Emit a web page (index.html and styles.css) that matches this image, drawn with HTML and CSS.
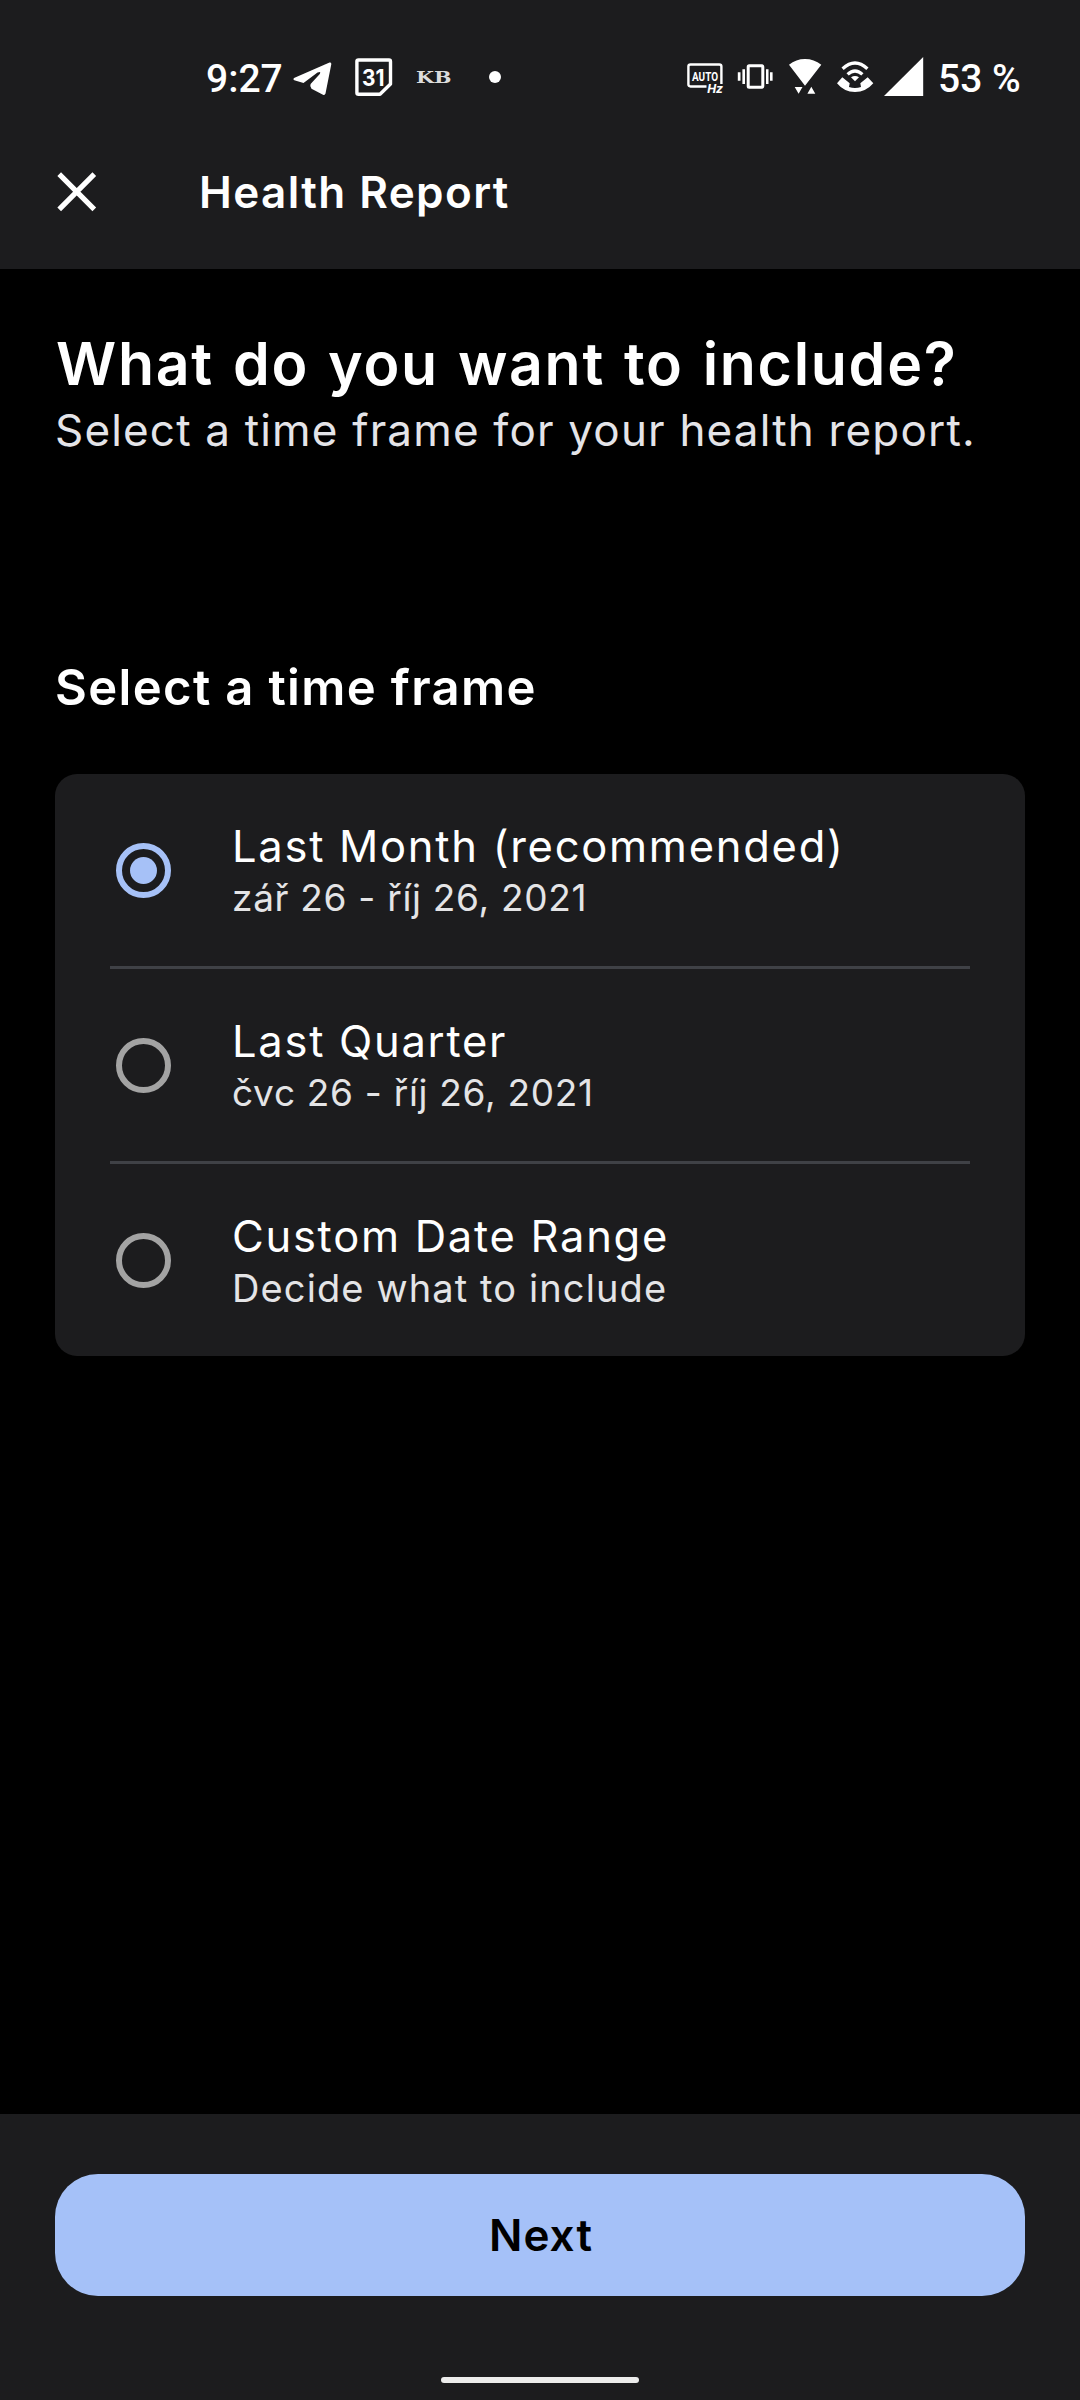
FILE: index.html
```html
<!DOCTYPE html>
<html lang="en">
<head>
<meta charset="utf-8">
<title>Health Report</title>
<link rel="stylesheet" href="styles.css">
</head>
<body>
<header class="top">
  <div class="status">
    <div class="status-left">
      <span class="clock">9:27</span>
      <svg class="telegram" width="44" height="44" viewBox="0 0 44 44"><path fill="#fff" d="M4 23Q2.500 24.300 4.300 25.200L13.500 28L27.500 17.600Q31.500 15.800 29.800 19L20.600 29Q19.400 31.500 21.500 33.700L33 39.800Q35 40.500 35.500 38.500L41.300 9.200Q41.500 7 39.500 7.600Z"/></svg>
      <svg class="calendar" width="44" height="44" viewBox="0 0 44 44"><path fill="none" stroke="#fff" stroke-width="3.400" stroke-linejoin="round" d="M6.500 5H37Q38.500 5 38.500 6.500V29L28 39.300H6.500Q4.900 39.300 4.900 37.800V6.500Q4.900 5 6.500 5Z"/><text class="cal-day" x="10" y="30.500" textLength="22.500" lengthAdjust="spacingAndGlyphs">31</text></svg>
      <svg class="kb" width="40" height="44" viewBox="0 0 40 44"><text class="kb-text" x="2" y="28.300" textLength="35.500" lengthAdjust="spacingAndGlyphs">KB</text></svg>
      <span class="dot"></span>
    </div>
    <div class="status-right">
      <svg width="44" height="44" viewBox="0 0 44 44"><path fill="none" stroke="#fff" stroke-width="2.400" d="M22.500 31.500H6.500Q4.400 31.500 4.400 29.500V11.500Q4.400 9.500 6.500 9.500H35.300Q37.400 9.500 37.400 11.500V29"/><text class="auto" x="8" y="25.600" textLength="26" lengthAdjust="spacingAndGlyphs">AUTO</text><text class="hz" x="23.300" y="38.300" textLength="15.500" lengthAdjust="spacingAndGlyphs">Hz</text></svg>
      <svg class="vibrate" width="38" height="44" viewBox="0 0 38 44"><rect x="12.200" y="10.800" width="14.600" height="21.400" rx="1" fill="none" stroke="#fff" stroke-width="3"/><path fill="#fff" d="M6.400 14.300h2.600v14.700h-2.600zM1.800 17.300h2.700v8.500h-2.700zM30 14.300h2.500v14.700h-2.500zM34 17.300h2.600v8.500h-2.600z"/></svg>
      <svg class="wifi" width="38" height="44" viewBox="0 0 38 44"><path fill="#fff" d="M3 9.700Q10 4 19 4T35.300 9.700L19 30.700ZM8.700 32H16.500L12.600 38.700ZM21.400 38.700H29.300L25.300 31.800Z"/></svg>
      <svg class="wificall" width="42" height="44" viewBox="0 0 42 44"><g fill="none" stroke="#fff" stroke-width="3.300"><path d="M8.600 13.700Q21 2.200 33.400 13.700"/><path d="M13.600 19.400Q21 12.600 28.400 19.400"/></g><path fill="#fff" d="M17 22.300Q21 19.500 25 22.300L21 26.200ZM3 28.300L8.300 22.300L15.700 28.300L15 32Q21 34 27 32L26.300 28.300L33.700 22.300L39.300 28.300Q32 37 21 37T3 28.300Z"/></svg>
      <svg class="signal" width="44" height="44" viewBox="0 0 44 44"><path fill="#fff" d="M2 41H41.200V2Z"/></svg>
      <span class="battery">53 %</span>
    </div>
  </div>
  <div class="appbar">
    <svg class="close" width="40" height="40" viewBox="0 0 40 40"><path stroke="#fff" stroke-width="5.200" d="M2.200 2.200L37.300 37.300M37.300 2.200L2.200 37.300"/></svg>
    <span class="title">Health Report</span>
  </div>
</header>
<main class="content">
  <h1>What do you want to include?</h1>
  <p class="lead">Select a time frame for your health report.</p>
  <h2>Select a time frame</h2>
  <div class="card">
    <div class="row">
      <span class="radio radio-on"></span>
      <div class="label"><div class="name">Last Month (recommended)</div><div class="detail">zář 26 - říj 26, 2021</div></div>
    </div>
    <div class="row">
      <span class="radio"></span>
      <div class="label"><div class="name">Last Quarter</div><div class="detail">čvc 26 - říj 26, 2021</div></div>
    </div>
    <div class="row">
      <span class="radio"></span>
      <div class="label"><div class="name">Custom Date Range</div><div class="detail detail-words">Decide what to include</div></div>
    </div>
  </div>
</main>
<footer class="bottom">
  <button class="next">Next</button>
  <span class="home"></span>
</footer>
</body>
</html>
```
FILE: styles.css
```css
* { box-sizing: border-box; }
body {
  margin: 0;
  width: 1080px;
  height: 2400px;
  display: flex;
  flex-direction: column;
  background: #000;
  color: #fff;
  font-family: Inter, "Liberation Sans", sans-serif;
}
svg { display: block; flex: none; }
h1, h2, p { margin: 0; white-space: nowrap; }

.top { height: 269px; background: #1c1c1e; }
.status {
  height: 154px;
  padding: 0 58px 0 206px;
  display: flex;
  justify-content: space-between;
  align-items: center;
  font: 500 39px/44px Roboto, sans-serif;
}
.status-left, .status-right { display: flex; align-items: center; }
.clock { width: 84px; padding-top: 3px; white-space: nowrap; }
.calendar { margin-left: 18px; }
.kb { margin-left: 18px; }
.dot { width: 12px; height: 12px; margin-left: 35px; border-radius: 50%; background: #fff; }
.vibrate { margin-left: 8px; }
.wifi { margin-left: 12px; }
.wificall { margin-left: 10px; }
.signal { margin-left: 6px; }
.battery { width: 84px; margin-left: 12px; padding-top: 3px; white-space: nowrap; }
.cal-day { font: 700 23px Inter, sans-serif; fill: #fff; }
.kb-text { font: 700 16px "DejaVu Serif", serif; fill: #dcdcdc; }
.auto { font: 700 12.500px Roboto, sans-serif; fill: #fff; }
.hz { font: italic 700 12px Roboto, sans-serif; fill: #fff; }

.appbar { height: 76px; padding-left: 57px; display: flex; align-items: center; }
.title { margin-left: 102px; font-size: 44px; font-weight: 600; line-height: 60px; letter-spacing: 1.400px; }

.content { flex: 1; padding: 60px 55px 0; }
h1 { font-size: 59px; font-weight: 600; line-height: 70px; letter-spacing: 1.700px; word-spacing: 2.500px; padding-left: 1px; }
.lead { padding-top: 1px; font-size: 44px; line-height: 60px; letter-spacing: 1.170px; word-spacing: 0; color: #e4e4e8; }
h2 { margin-top: 198px; font-size: 49px; font-weight: 600; line-height: 60px; letter-spacing: 1.350px; }
.card { margin-top: 56px; padding: 0 55px; border-radius: 22px; background: #1c1c1e; }
.row { height: 195px; display: flex; align-items: center; gap: 61px; padding-left: 6px; border-bottom: 3px solid #3f4146; }
.row:last-child { height: 192px; border-bottom: 0; }
.radio { width: 55px; height: 55px; border: 6px solid #a3a3a3; border-radius: 50%; display: grid; place-items: center; }
.radio-on { border-color: #a6c1f7; }
.radio-on::after { content: ""; width: 27px; height: 27px; border-radius: 50%; background: #a6c1f7; }
.label { padding-top: 4px; white-space: nowrap; }
.name { font-size: 43.500px; line-height: 52px; letter-spacing: 1.720px; }
.detail { font-size: 37px; line-height: 52px; letter-spacing: 0.700px; color: #e4e4e6; }
.detail-words { font-size: 38px; letter-spacing: 1.120px; }

.bottom { height: 286px; padding: 60px 55px 0; display: flex; flex-direction: column; align-items: center; background: #1c1c1e; }
.next {
  width: 970px;
  height: 122px;
  padding: 0 0 0 2px;
  border: 0;
  border-radius: 43px;
  background: #a5c1f8;
  color: #000;
  font: 600 44px/60px Inter, sans-serif;
  letter-spacing: 1.100px;
}
.home { width: 198px; height: 6px; margin-top: 81px; border-radius: 3px; background: #ececec; }
```
